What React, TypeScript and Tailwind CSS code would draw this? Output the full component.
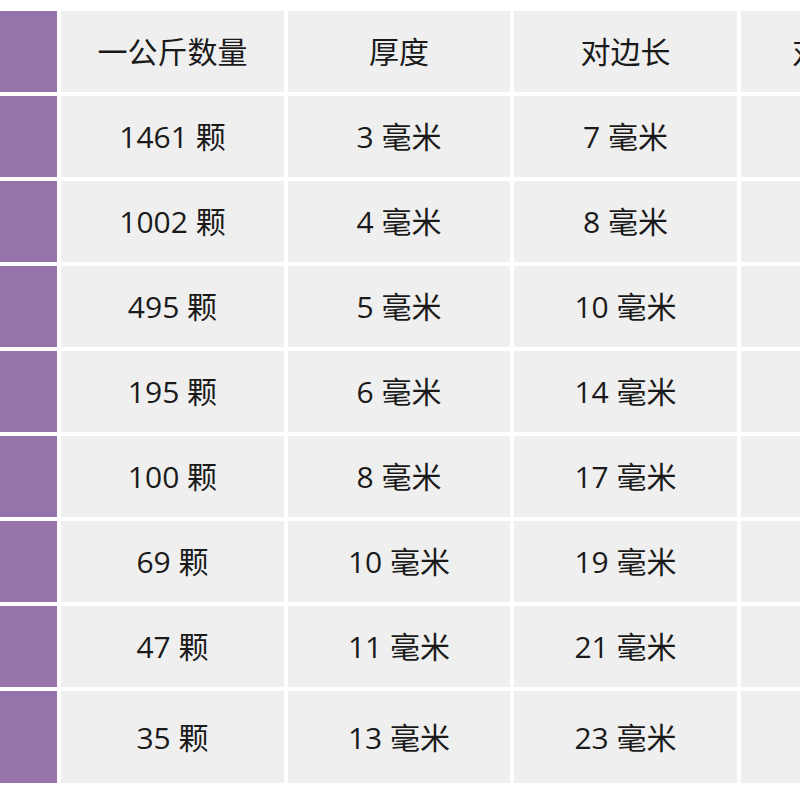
import React from "react";

const rows: [string, string, string, string][] = [
  ["1461 颗", "3 毫米", "7 毫米", "8 毫米"],
  ["1002 颗", "4 毫米", "8 毫米", "9 毫米"],
  ["495 颗", "5 毫米", "10 毫米", "12 毫米"],
  ["195 颗", "6 毫米", "14 毫米", "16 毫米"],
  ["100 颗", "8 毫米", "17 毫米", "20 毫米"],
  ["69 颗", "10 毫米", "19 毫米", "22 毫米"],
  ["47 颗", "11 毫米", "21 毫米", "24 毫米"],
  ["35 颗", "13 毫米", "23 毫米", "27 毫米"],
];

const header = ["一公斤数量", "厚度", "对边长", "对角线长"];

function Cell({ children }: { children?: React.ReactNode }) {
  return (
    <div className="bg-[#efefef] flex items-center justify-center text-[30px] text-[#1a1a1a] whitespace-nowrap">
      {children}
    </div>
  );
}

export default function App() {
  const all = [header, ...rows];
  return (
    <div
      className="w-[800px] h-[800px] bg-white overflow-hidden pt-[11px]"
      style={{ fontFamily: '"Open Sans", "Noto Sans CJK SC", sans-serif' }}
    >
      <div className="grid grid-cols-[57px_223px_222px_223px_222px] gap-x-[4px] gap-y-[4px] w-[1000px]">
        {all.map((r, i) => (
          <React.Fragment key={i}>
            <div className={`bg-[#9673a9] ${i === all.length - 1 ? "h-[92px]" : "h-[81px]"}`} />
            {r.map((c, j) => (
              <Cell key={j}>{c}</Cell>
            ))}
          </React.Fragment>
        ))}
      </div>
    </div>
  );
}
